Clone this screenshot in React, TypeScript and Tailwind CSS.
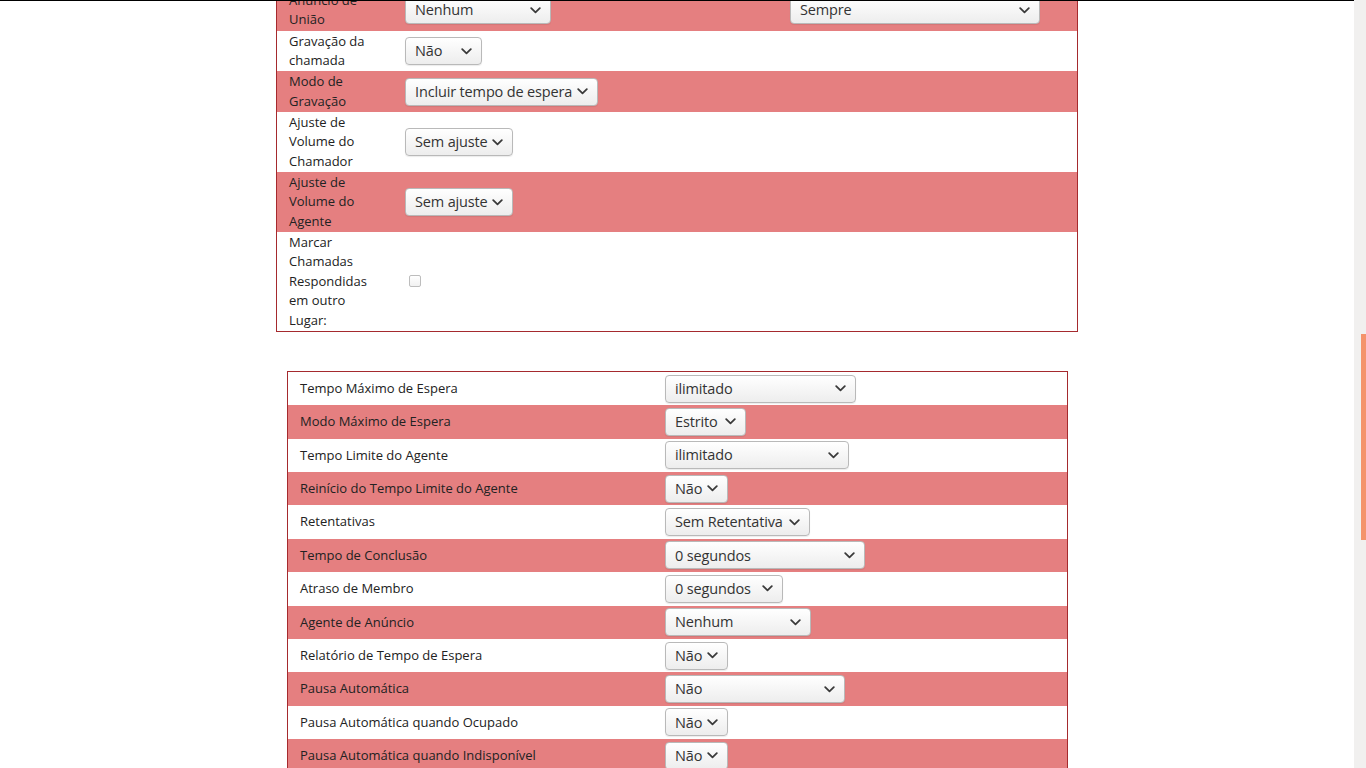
import React from "react";

const ROW_RED = "bg-[#e57f80]";

function Chevron() {
  return (
    <svg width="11" height="7" viewBox="0 0 11 7" className="shrink-0">
      <path d="M1.2 1.2 L5.5 5.3 L9.8 1.2" fill="none" stroke="#3a3a3a" strokeWidth="1.8" strokeLinecap="round" strokeLinejoin="round" />
    </svg>
  );
}

function FakeSelect({ value, width }: { value: string; width: number }) {
  return (
    <div
      className="flex h-[28px] items-center justify-between gap-[4px] rounded-[4px] border border-[#b9b9b9] bg-gradient-to-b from-white to-[#ededed] pl-[9px] pr-[9px] text-[14.5px] tracking-[-0.15px] text-[#333] shadow-[0_1px_1px_rgba(0,0,0,0.08)]"
      style={{ width }}
    >
      <span className="whitespace-nowrap">{value}</span>
      <Chevron />
    </div>
  );
}

type Sel = { value: string; width: number };
type TopRow = { lines: string[]; select?: Sel; checkbox?: boolean; extra?: Sel };

const topRows: TopRow[] = [
  { lines: ["Anúncio de", "União"], select: { value: "Nenhum", width: 146 }, extra: { value: "Sempre", width: 250 } },
  { lines: ["Gravação da", "chamada"], select: { value: "Não", width: 77 } },
  { lines: ["Modo de", "Gravação"], select: { value: "Incluir tempo de espera", width: 193 } },
  { lines: ["Ajuste de", "Volume do", "Chamador"], select: { value: "Sem ajuste", width: 108 } },
  { lines: ["Ajuste de", "Volume do", "Agente"], select: { value: "Sem ajuste", width: 108 } },
  { lines: ["Marcar", "Chamadas", "Respondidas", "em outro", "Lugar:"], checkbox: true },
];

const bottomRows: { label: string; value: string; width: number }[] = [
  { label: "Tempo Máximo de Espera", value: "ilimitado", width: 191 },
  { label: "Modo Máximo de Espera", value: "Estrito", width: 81 },
  { label: "Tempo Limite do Agente", value: "ilimitado", width: 184 },
  { label: "Reinício do Tempo Limite do Agente", value: "Não", width: 63 },
  { label: "Retentativas", value: "Sem Retentativa", width: 145 },
  { label: "Tempo de Conclusão", value: "0 segundos", width: 200 },
  { label: "Atraso de Membro", value: "0 segundos", width: 118 },
  { label: "Agente de Anúncio", value: "Nenhum", width: 146 },
  { label: "Relatório de Tempo de Espera", value: "Não", width: 63 },
  { label: "Pausa Automática", value: "Não", width: 180 },
  { label: "Pausa Automática quando Ocupado", value: "Não", width: 63 },
  { label: "Pausa Automática quando Indisponível", value: "Não", width: 63 },
];

export default function App() {
  return (
    <div
      className="relative flex h-[768px] w-[1366px] overflow-hidden bg-white text-[#222]"
      style={{ fontFamily: '"Open Sans", "Noto Sans", sans-serif' }}
    >
      {/* fixed header edge */}
      <div className="absolute left-0 top-0 z-10 h-px w-[1354px] bg-black" />

      <div className="flex-1 overflow-hidden">
        {/* top table (scrolled: first row partly above the fold) */}
        <div className="ml-[276px] mt-[-10px] w-[802px] border-x border-b border-[#a52a2e]">
          {topRows.map((r, i) => (
            <div key={i} className={`flex items-center py-px ${i % 2 === 0 ? ROW_RED : "bg-white"}`}>
              <div className="w-[116px] shrink-0 pl-3 text-[13px] leading-[19.35px]">
                {r.lines.map((l, j) => (
                  <div key={j} className="whitespace-nowrap">{l}</div>
                ))}
              </div>
              <div className="w-[385px] shrink-0 pl-3">
                {r.select && <FakeSelect value={r.select.value} width={r.select.width} />}
                {r.checkbox && (
                  <div className="ml-1 h-[12px] w-[12px] rounded-[2px] border border-[#bdbdbd] bg-gradient-to-b from-white to-[#f1f1f1]" />
                )}
              </div>
              <div className="pl-3">
                {r.extra && <FakeSelect value={r.extra.value} width={r.extra.width} />}
              </div>
            </div>
          ))}
        </div>

        {/* bottom table */}
        <div className="ml-[287px] mt-[39px] w-[781px] border border-b-0 border-[#a52a2e]">
          {bottomRows.map((r, i) => (
            <div key={i} className={`flex h-[33.4px] items-center ${i % 2 === 1 ? ROW_RED : "bg-white"}`}>
              <div className="w-[365px] shrink-0 pl-3 text-[13px] whitespace-nowrap">{r.label}</div>
              <div className="pl-3">
                <FakeSelect value={r.value} width={r.width} />
              </div>
            </div>
          ))}
        </div>
      </div>

      {/* scrollbar */}
      <div className="flex w-[12px] shrink-0 flex-col bg-[#f1f0ef]">
        <div className="h-[334px]" />
        <div className="ml-[7px] h-[206px] w-[5px] bg-[#f4936b]" />
      </div>
    </div>
  );
}
